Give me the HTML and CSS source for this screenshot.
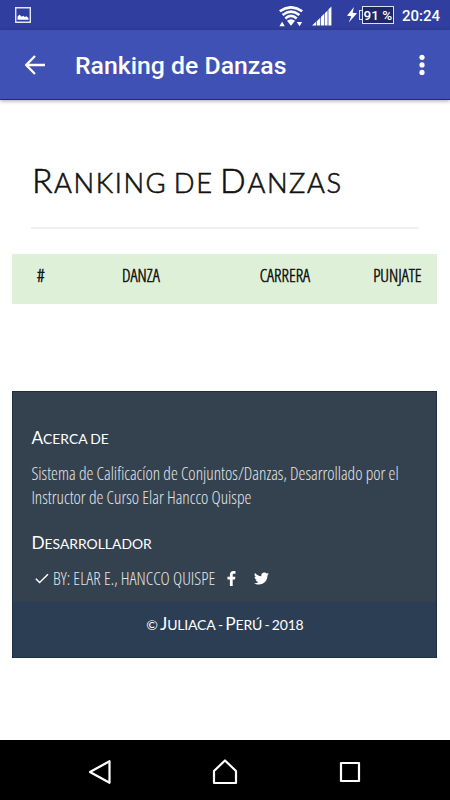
FILE: index.html
```
<!DOCTYPE html>
<html lang="es">
<head>
  <meta charset="UTF-8" />
  <meta name="viewport" content="width=device-width, initial-scale=1.0" />
  <title>Ranking de Danzas</title>
  <link rel="stylesheet" href="styles.css">
</head>
<body>

  <div class="status-bar">
    <svg class="icon-image" width="16" height="16" viewBox="0 0 16 16">
      <path d="M.7.7h14.6v14.6H.7z" fill="none" stroke="#e4e6f5" stroke-width="1.4"/>
      <path d="M2.5 12.8V9.5l2-1.8 2.3 2 1.4-1 1.6 1.3 1.5-.8 2.2 1.8v1.8z" fill="#fff"/>
    </svg>
    <div class="status-right">
      <svg class="icon-wifi" width="24" height="21" viewBox="0 0 24 21">
        <g fill="none" stroke="#fff" stroke-width="2.6">
          <path d="M.8 5.2Q12-2.6 23.2 5.2"/>
          <path d="M3.6 9Q12 2.2 20.4 9"/>
          <path d="M6.3 12.4Q12 7.4 17.7 12.4"/>
        </g>
        <path d="M8 14.8Q12 11.5 16 14.8L12 19.8z" fill="#fff"/>
        <path d="M.4 20.2h5.4L3.1 15.7zM17.8 16h5.4l-2.7 4.3z" fill="#fff"/>
      </svg>
      <svg class="icon-signal" width="20" height="20" viewBox="0 0 20 20">
        <path d="M0 19.5L4 15.8v3.7zM4.7 15.2L8.3 11.7v7.8H4.7zM9 11l3.4-3.5v12H9zM13 7l2.6-2.6v15.1H13zM16.4 3.6L19.4.5v19h-3z" fill="#fff"/>
      </svg>
      <svg class="icon-bolt" width="10" height="16" viewBox="0 0 10 16">
        <path d="M7 0L0 8.8l4.2.4L1.8 15.6 10 6.2l-4.4-.4z" fill="#fff"/>
      </svg>
      <div class="battery">91 %</div>
      <div class="clock">20:24</div>
    </div>
  </div>

  <header class="toolbar">
    <svg width="20" height="20" viewBox="0 0 20 20">
      <path d="M20 10H1.8M10 1L1.2 10l8.8 9" fill="none" stroke="#fff" stroke-width="2.3"/>
    </svg>
    <div class="toolbar-title">Ranking de Danzas</div>
    <svg width="6" height="22" viewBox="0 0 6 22">
      <g fill="#fff"><circle cx="3" cy="3.3" r="2.6"/><circle cx="3" cy="10.9" r="2.6"/><circle cx="3" cy="18.4" r="2.6"/></g>
    </svg>
  </header>

  <main class="page">
    <h1 class="caps"><span>Ranking</span> de <span>Danzas</span></h1>

    <table class="ranking">
      <tr>
        <th>#</th>
        <th>DANZA</th>
        <th>CARRERA</th>
        <th>PUNJATE</th>
      </tr>
    </table>

    <footer class="footer">
      <div class="about">
        <h3 class="caps"><span>Acerca</span> de</h3>
        <p><span class="line">Sistema de Calificacíon de Conjuntos/Danzas, Desarrollado por el</span> <span class="line">Instructor de Curso Elar Hancco Quispe</span></p>
        <h3 class="caps"><span>Desarrollador</span></h3>
        <div class="social">
          <svg width="14" height="11" viewBox="0 0 14 11">
            <path d="M.8 5.8l3.8 3.7L13 1.2" fill="none" stroke="#fff" stroke-width="1.5"/>
          </svg>
          <span class="line by">BY: ELAR E., HANCCO QUISPE</span>
          <svg class="icon-facebook" width="9" height="15" viewBox="0 0 9 15">
            <path d="M8.5.2v2.5H7c-1.1 0-1.3.5-1.3 1.3v1.7h2.7L8 8.4H5.7V15H2.9V8.4H.4V5.7h2.5v-2C2.9 1.4 4.3 0 6.4 0c1 0 1.8.1 2.1.2z" fill="#fff"/>
          </svg>
          <svg width="15" height="13" viewBox="0 0 15 12.2">
            <path d="M15 1.4c-.4.6-.9 1.1-1.5 1.6v.4c0 4-3 8.8-8.8 8.8-1.7 0-3.3-.5-4.7-1.4 1.7.2 3.2-.3 4.5-1.3-1.4 0-2.5-.9-2.9-2.1.5.1.9.1 1.4 0C1.6 7.1.6 5.9.6 4.3c.4.2.9.4 1.4.4C.6 3.7.2 2 1 .6c1.6 1.9 3.8 3.1 6.3 3.2C6.9 1.7 8.4 0 10.4 0c.9 0 1.7.4 2.2 1 .7-.1 1.4-.4 2-.7-.2.7-.7 1.3-1.3 1.7.6-.1 1.2-.2 1.7-.6z" fill="#fff"/>
          </svg>
        </div>
      </div>
      <div class="copyright caps">© <span>Juliaca</span> - <span>Perú</span> - 2018</div>
    </footer>
  </main>

  <nav class="nav-bar">
    <svg width="24" height="26" viewBox="0 0 24 26">
      <path d="M21.5 2.2v21.6L2 13z" fill="none" stroke="#fff" stroke-width="2.2" stroke-linejoin="round"/>
    </svg>
    <svg width="26" height="26" viewBox="0 0 26 26">
      <path d="M13 1.5L2 12v12h22V12z" fill="none" stroke="#fff" stroke-width="2.2" stroke-linejoin="round"/>
    </svg>
    <svg width="22" height="22" viewBox="0 0 22 22">
      <path d="M2 2h18v18H2z" fill="none" stroke="#fff" stroke-width="2.2" stroke-linejoin="round"/>
    </svg>
  </nav>

</body>
</html>
```
FILE: styles.css
```
body {
  font-family: "Open Sans", sans-serif;
  background-color: #fff;
  margin: 0;
  height: 800px;
  display: flex;
  flex-direction: column;
  overflow: hidden;
}

svg {
  display: block;
  flex: none;
}

.status-bar {
  height: 30px;
  background-color: #303f9f;
  color: #fff;
  font-family: Roboto, sans-serif;
  display: flex;
  justify-content: space-between;
  align-items: center;
  padding: 0 10px 0 15px;
}

.status-right {
  display: flex;
  align-items: center;
}

.icon-wifi {
  margin-top: 2px;
}

.icon-signal {
  margin-left: 9px;
  margin-top: 2px;
}

.icon-bolt {
  margin: 0 5px 0 15px;
}

.battery {
  box-sizing: border-box;
  width: 32px;
  height: 18px;
  border: 1px solid #dfe1f2;
  background-color: #20276a;
  font-size: 13.5px;
  font-weight: 500;
  line-height: 16px;
  text-align: center;
  white-space: nowrap;
  position: relative;
}

.battery::before {
  content: "";
  position: absolute;
  left: -4px;
  top: 3px;
  width: 2px;
  height: 8px;
  border: 1px solid #dfe1f2;
  border-right: none;
}

.clock {
  font-size: 15px;
  font-weight: 500;
  margin-left: 8px;
  padding-top: 1px;
}

.toolbar {
  height: 70px;
  box-sizing: border-box;
  background-color: #3f51b5;
  border-bottom: 1px solid #102aa0;
  box-shadow: 0 1px 4px rgba(0, 0, 0, 0.35);
  display: flex;
  align-items: center;
  padding: 0 25px;
}

.toolbar-title {
  flex: 1;
  margin-left: 30px;
  padding-top: 2px;
  color: #fff;
  font-family: Roboto, sans-serif;
  font-size: 24.8px;
  font-weight: 500;
}

.page {
  flex: 1;
  padding: 0 12.4px;
}

/* small caps a bit taller than the browser's own */
.caps {
  font-family: Lato, sans-serif;
  font-weight: 400;
  text-transform: uppercase;
}

.caps span {
  display: inline-block;
}

.caps span::first-letter {
  font-size: 1.24em;
}

h1.caps {
  margin: 0 18.5px 25px;
  height: 129px;
  box-sizing: border-box;
  padding: 56px 0 0 1px;
  border-bottom: 2px solid #f0f0f0;
  color: #111;
  font-size: 27.3px;
  font-weight: 300;
  line-height: 48px;
  letter-spacing: 1.6px;
  word-spacing: -2.5px;
  white-space: nowrap;
  -webkit-text-stroke: 0.6px #111;
}

.ranking {
  width: 425px;
  height: 50px;
  table-layout: fixed;
  border-collapse: collapse;
  background-color: #dff0d8;
}

.ranking th {
  padding: 9px 0 0;
  vertical-align: top;
  text-align: center;
  color: #111;
  font-size: 17.4px;
  font-weight: 300;
  font-stretch: 75%;
  line-height: 24px;
  -webkit-text-stroke: 0.5px #111;
}

.ranking th:nth-child(1) { width: 57px; }
.ranking th:nth-child(2) { width: 143px; }
.ranking th:nth-child(3) { width: 145px; }

.footer {
  width: 423px;
  height: 265px;
  margin-top: 87px;
  border: 1px solid #1d3047;
  background-color: #34414e;
  color: #fff;
}

.about {
  box-sizing: border-box;
  height: 210px;
  padding: 33px 18px 0;
}

h3.caps {
  margin: 0;
  font-size: 13.9px;
  line-height: 25px;
  word-spacing: -1px;
}

.about p {
  margin: 10px 0 21px;
  color: #e4e6e8;
  font-size: 17.35px;
  line-height: 24px;
}

.line {
  display: block;
  font-weight: 300;
  font-stretch: 75%;
  white-space: nowrap;
}

.social {
  display: flex;
  align-items: center;
  height: 24px;
  margin-top: 10px;
  padding-left: 3.5px;
  color: #e4e6e8;
  font-size: 17.4px;
}

.by {
  width: 162px;
  margin-left: 4px;
}

.icon-facebook {
  margin: 0 18px 0 12.5px;
}

.copyright {
  height: 55px;
  background-color: #2c3e54;
  font-size: 14px;
  line-height: 44px;
  letter-spacing: -0.2px;
  word-spacing: -1px;
  text-align: center;
}

.nav-bar {
  height: 60px;
  background-color: #000;
  display: flex;
  justify-content: space-between;
  align-items: center;
  padding: 4px 89px 0 88px;
  box-sizing: border-box;
}

.nav-bar svg:nth-child(2) {
  margin-right: 1px;
}
```
